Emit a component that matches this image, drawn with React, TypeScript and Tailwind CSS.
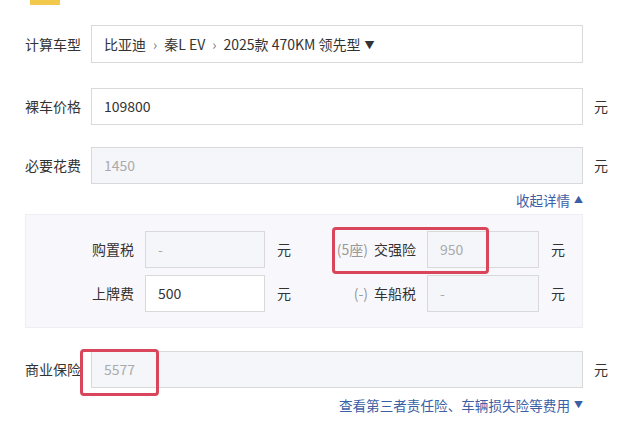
const font = { fontFamily: '"Microsoft YaHei", "Noto Sans CJK SC", "Noto Sans", sans-serif' };

function Row({ label, children, unit }: { label: string; children: React.ReactNode; unit?: boolean }) {
  return (
    <div className="flex items-center">
      <div className="w-[66px] shrink-0 text-[14px] text-[#333]">{label}</div>
      <div className="w-[492px] shrink-0">{children}</div>
      {unit && <div className="ml-[11px] text-[14px] text-[#333]">元</div>}
    </div>
  );
}

function SmallField({ label, prefix, value, disabled, labelW, inputW }: {
  label: string; prefix?: string; value: string; disabled?: boolean; labelW: string; inputW: string;
}) {
  return (
    <div className="flex items-center">
      <div className={`${labelW} shrink-0 pr-[11px] text-right text-[14px] text-[#333]`}>
        {prefix && <span className="mr-[6px] text-[#999]">{prefix}</span>}
        {label}
      </div>
      <div
        className={`${inputW} h-[37px] shrink-0 border border-[#d9d9d9] px-[12px] flex items-center text-[14px] ${
          disabled ? "bg-[#f5f6fa] text-[#aaa]" : "bg-white text-[#333]"
        }`}
      >
        {value}
      </div>
      <div className="ml-[12px] text-[14px] text-[#333]">元</div>
    </div>
  );
}

export default function App() {
  return (
    <div className="relative w-[640px] h-[431px] bg-white overflow-hidden" style={font}>
      <div className="ml-[30px] w-[30px] h-[5px] bg-[#f2c94c]" />

      <div className="pl-[25px] pt-[20px]">
        <Row label="计算车型">
          <div className="h-[38px] border border-[#d9d9d9] bg-white flex items-center px-[12px] text-[14px] text-[#333]">
            <span>比亚迪</span>
            <span className="mx-[7px] text-[#777] text-[14px]">›</span>
            <span>秦L EV</span>
            <span className="mx-[7px] text-[#777] text-[14px]">›</span>
            <span>2025款 470KM 领先型</span>
            <span className="ml-[4px] text-[10px]">▼</span>
          </div>
        </Row>

        <div className="mt-[25px]">
          <Row label="裸车价格" unit>
            <div className="h-[37px] border border-[#d9d9d9] bg-white flex items-center px-[12px] text-[14px] text-[#333]">
              109800
            </div>
          </Row>
        </div>

        <div className="mt-[22px]">
          <Row label="必要花费" unit>
            <div className="h-[37px] border border-[#d9d9d9] bg-[#f5f6fa] flex items-center px-[12px] text-[14px] text-[#aaa]">
              1450
            </div>
          </Row>
        </div>

        <div className="w-[558px] flex justify-end items-center mt-[7px] h-[18px] text-[13.5px] text-[#3b5ea6]">
          收起详情<span className="ml-[4px] text-[9px]">▲</span>
        </div>

        <div className="mt-[5px] w-[558px] border border-[#eceef4] bg-[#f8f8fc] pt-[16px] pb-[15px] flex flex-col gap-[7px]">
          <div className="flex">
            <SmallField label="购置税" value="-" disabled labelW="w-[119px]" inputW="w-[120px]" />
            <div className="ml-[23px]">
              <SmallField label="交强险" prefix="(5座)" value="950" disabled labelW="w-[113px]" inputW="w-[112px]" />
            </div>
          </div>
          <div className="flex">
            <SmallField label="上牌费" value="500" labelW="w-[119px]" inputW="w-[120px]" />
            <div className="ml-[23px]">
              <SmallField label="车船税" prefix="(-)" value="-" disabled labelW="w-[113px]" inputW="w-[112px]" />
            </div>
          </div>
        </div>

        <div className="mt-[23px]">
          <Row label="商业保险" unit>
            <div className="h-[37px] border border-[#d9d9d9] bg-[#f5f6fa] flex items-center px-[12px] text-[14px] text-[#aaa]">
              5577
            </div>
          </Row>
        </div>

        <div className="w-[558px] flex justify-end items-center mt-[8px] h-[18px] text-[13.6px] text-[#3b5ea6]">
          查看第三者责任险、车辆损失险等费用<span className="ml-[4px] text-[9px]">▼</span>
        </div>
      </div>

      <div className="absolute left-[332px] top-[227px] w-[157px] h-[47px] border-[3px] border-[#d9455a] rounded-[4px]" />
      <div className="absolute left-[80px] top-[349px] w-[79px] h-[47px] border-[3px] border-[#d9455a] rounded-[4px]" />
    </div>
  );
}
